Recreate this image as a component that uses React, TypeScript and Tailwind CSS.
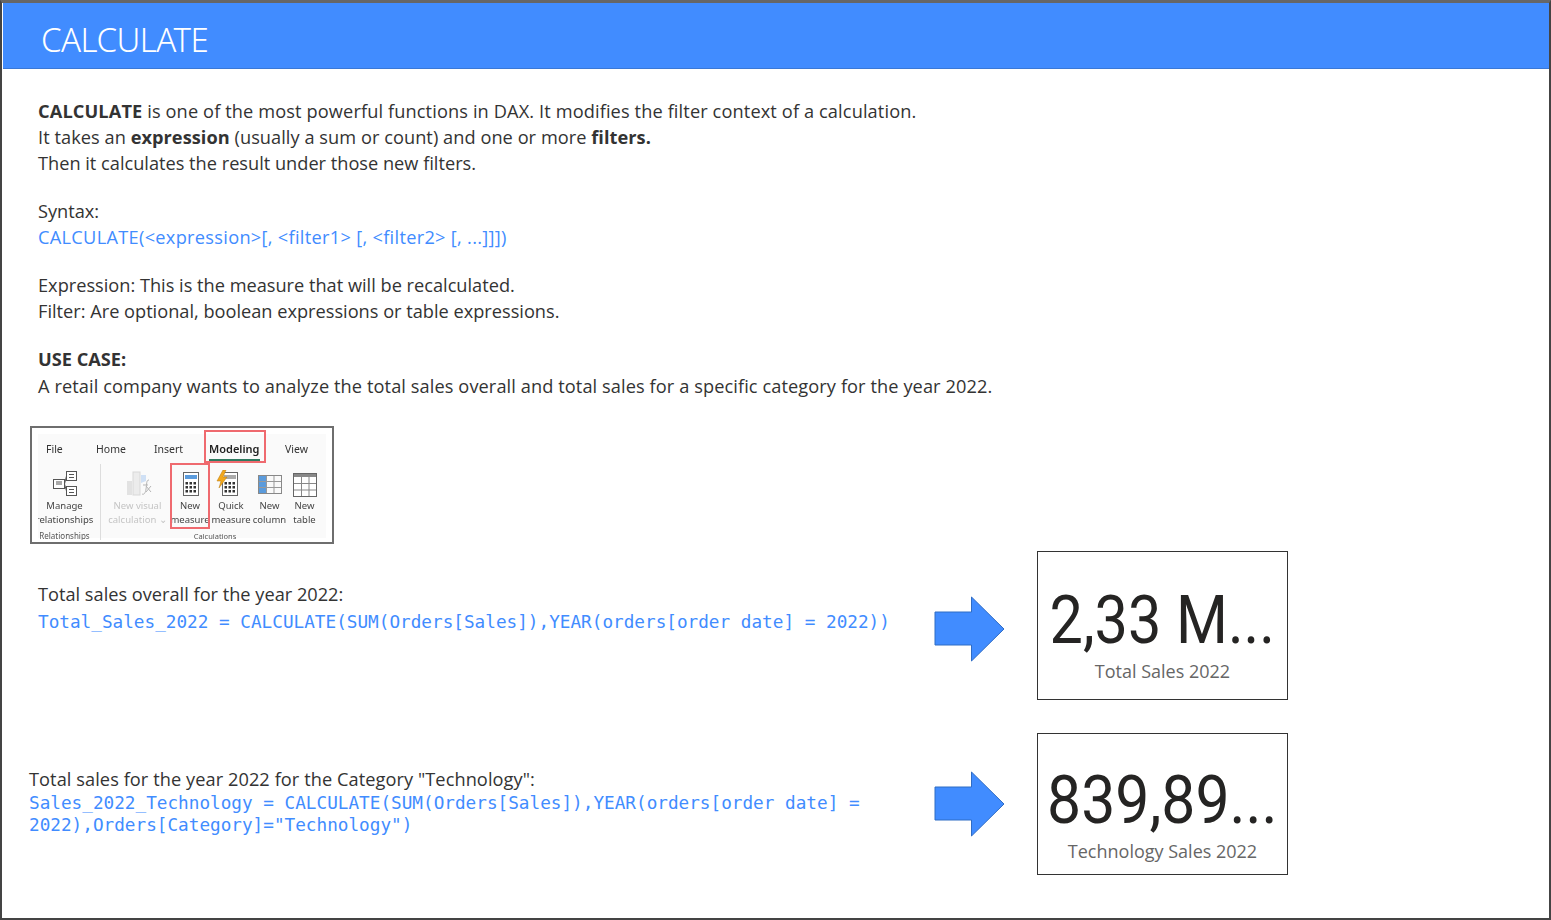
import React from 'react';

const BLUE = '#418cff';

const Arrow = () => (
  <svg width="72" height="66" viewBox="0 0 72 66" className="shrink-0">
    <path d="M1 16H37.5V1L70 33L37.5 65V49H1Z" fill={BLUE} stroke="#2f6cc4" strokeWidth="1" />
  </svg>
);

const ManageIcon = () => (
  <svg width="26" height="26" viewBox="0 0 26 26" fill="none" stroke="#555" strokeWidth="1">
    <rect x="1.500" y="8.500" width="11" height="9" fill="#fff" />
    <rect x="14.500" y="0.500" width="10" height="9" fill="#fff" />
    <rect x="14.500" y="15.500" width="10" height="9" fill="#fff" />
    <path d="M12.500 13L14.500 5M12.500 13L14.500 20M4 13H10M4 11H10M17 3.500H22M17 6.500H22M17 18.500H22M17 21.500H22" />
  </svg>
);

const VisualCalcIcon = () => (
  <svg width="26" height="26" viewBox="0 0 26 26" fill="none" className="ml-[3px]">
    <rect x="1" y="10" width="5" height="14" fill="#e2e2e2" />
    <rect x="7" y="1" width="7" height="23" fill="#ececec" stroke="#d8d8d8" />
    <path d="M15 4H20V10L15 12Z" fill="#cfe0f5" />
    <path d="M23 9C20 9 21 13 20 18C19.500 22 18 24 16 23M17 14H22M20 15L25 21M25 15L20 21" stroke="#b5b5b5" />
  </svg>
);

const CalcIcon = ({ bolt = false }: { bolt?: boolean }) => (
  <svg width={bolt ? 22 : 18} height="27" viewBox={bolt ? '0 0 22 27' : '4 0 18 27'} fill="none" className={bolt ? 'mr-[8px]' : ''}>
    <rect x="6.500" y="2.500" width="15" height="23" fill="#fff" stroke="#666" />
    <rect x="8" y="5" width="12" height="4" fill={bolt ? '#aaa' : '#5b9bdc'} />
    {[12, 16, 20].map(y =>
      [8.500, 12.500, 16.500].map(x => <rect key={`${x}-${y}`} x={x} y={y} width="2.500" height="2.500" fill="#333" />)
    )}
    {bolt && <path d="M7 0L1 11H5L3 18L11 7H7L10 0Z" fill="#f2a81d" stroke="#b87a10" strokeWidth="0.5" />}
  </svg>
);

const ColumnIcon = () => (
  <svg width="24" height="19" viewBox="0 0 24 19" fill="none" className="mb-[3px]">
    <rect x="1" y="1" width="7" height="17" fill="#5b9bdc" />
    <rect x="0.500" y="0.500" width="23" height="18" stroke="#888" />
    <path d="M8.500 1V18M16 1V18M1 6.500H23M1 12.500H23" stroke="#999" />
  </svg>
);

const TableIcon = () => (
  <svg width="24" height="24" viewBox="0 0 24 24" fill="none">
    <rect x="0.500" y="0.500" width="23" height="23" stroke="#666" fill="#fff" />
    <rect x="1" y="1" width="22" height="3" fill="#888" />
    <path d="M8.500 4V23M16 4V23M1 10.500H23M1 17H23" stroke="#888" />
  </svg>
);

const RibbonTool = ({ icon, lines, muted, width }: { icon: React.ReactNode; lines: string[]; muted?: boolean; width: string }) => (
  <div className={`flex flex-col items-center ${width} ${muted ? 'text-[#c4c4c4]' : 'text-[#444]'}`}>
    <div className="h-[33px] flex items-end justify-center">{icon}</div>
    <div className="mt-[2px] text-center text-[9.500px] leading-[14px] whitespace-nowrap">
      {lines.map(line => <div key={line} className="flex justify-center">{line}</div>)}
    </div>
  </div>
);

const Ribbon = () => (
  <div className="relative ml-[-8px] w-[304px] h-[118px] border-2 border-[#6e6e6e] bg-white overflow-hidden font-['Noto_Sans',sans-serif] blur-[0.3px]">
    <div className="absolute left-[6px] right-[6px] top-[6px] bottom-[4px] bg-[#fafafa]" />
    <div className="relative flex h-[36px] items-center pt-[6px] pl-[14px] text-[10.500px] text-[#333]">
      <span className="w-[50px]">File</span>
      <span className="w-[58px]">Home</span>
      <span className="w-[55px]">Insert</span>
      <span className="w-[76px] text-[11px] font-semibold text-[#222]">Modeling</span>
      <span>View</span>
    </div>
    <div className="relative flex pl-[6px]">
      <div className="flex w-[63px] flex-col items-center border-r border-[#ddd] h-[76px] pr-[9px] overflow-hidden">
        <RibbonTool icon={<ManageIcon />} lines={['Manage', 'relationships']} width="w-[53px]" />
        <div className="text-[8px] text-[#555] mt-[3px] leading-[12px] whitespace-nowrap">Relationships</div>
      </div>
      <div className="flex flex-col">
        <div className="flex">
          <RibbonTool icon={<VisualCalcIcon />} lines={['New visual', 'calculation ⌄']} muted width="w-[73px]" />
          <RibbonTool icon={<CalcIcon />} lines={['New', 'measure']} width="w-[32px]" />
          <RibbonTool icon={<CalcIcon bolt />} lines={['Quick', 'measure']} width="w-[50px]" />
          <RibbonTool icon={<ColumnIcon />} lines={['New', 'column']} width="w-[27px]" />
          <RibbonTool icon={<TableIcon />} lines={['New', 'table']} width="w-[43px]" />
        </div>
        <div className="text-center text-[7.500px] text-[#555] mt-[3px] leading-[12px] pl-[3px]">Calculations</div>
      </div>
    </div>
    <div className="absolute left-[172px] top-[2px] w-[62px] h-[33px] border-2 border-[#ef6a6f]" />
    <div className="absolute left-[177px] top-[31px] w-[51px] h-[2px] bg-[#2f7a60]" />
    <div className="absolute left-[138px] top-[35px] w-[40px] h-[66px] border-2 border-[#ef6a6f]" />
  </div>
);

const KpiCard = ({ value, label, className, valueClass }: { value: string; label: string; className: string; valueClass: string }) => (
  <div className={`w-[251px] shrink-0 border border-[#333] bg-white flex flex-col items-center justify-center ${className}`}>
    <div className={`font-['Roboto',sans-serif] text-[#252423] text-[66px] leading-[72px] whitespace-nowrap ${valueClass}`}>{value}</div>
    <div className="text-[18px] leading-[24px] mt-[2px] text-[#666]">{label}</div>
  </div>
);

export default function App() {
  return (
    <div className="w-[1551px] h-[920px] bg-white overflow-hidden font-['Open_Sans',sans-serif] text-[#333] border-x-2 border-b-2 border-t-[3px] border-x-[#444] border-b-[#444] border-t-[#666]">
      <header className="h-[66px] ml-[1px] bg-[#418cff] border-b border-[#3a78d6] flex items-center pl-[38px] pt-[8px]">
        <h1 className="text-[33px] font-['Noto_Sans',sans-serif] font-light text-white tracking-[-0.5px]">CALCULATE</h1>
      </header>

      <main className="pl-[36px] pt-[29px] text-[18.200px] leading-[26px]">
        <p className="tracking-[0.12px]"><b>CALCULATE</b> is one of the most powerful functions in DAX. It modifies the filter context of a calculation.</p>
        <p className="tracking-[0.05px]">It takes an <b>expression</b> (usually a sum or count) and one or more <b>filters.</b></p>
        <p>Then it calculates the result under those new filters.</p>

        <p className="mt-[22px]">Syntax:</p>
        <p className="text-[#418cff] tracking-[0.3px]">CALCULATE(&lt;expression&gt;[, &lt;filter1&gt; [, &lt;filter2&gt; [, ...]]])</p>

        <p className="mt-[22px]">Expression: This is the measure that will be recalculated.</p>
        <p>Filter: Are optional, boolean expressions or table expressions.</p>

        <p className="mt-[22px] font-bold">USE CASE:</p>
        <p className="mt-[1px] tracking-[0.09px]">A retail company wants to analyze the total sales overall and total sales for a specific category for the year 2022.</p>

        <div className="mt-[27px]">
          <Ribbon />
        </div>

        <div className="flex items-start mt-[7px]">
          <div className="w-[896px] pt-[30px]">
            <p>Total sales overall for the year 2022:</p>
            <p className="font-['DejaVu_Sans_Mono',monospace] text-[#418cff] text-[17.700px] leading-[28px] whitespace-nowrap mt-[1px]">Total_Sales_2022 = CALCULATE(SUM(Orders[Sales]),YEAR(orders[order date] = 2022))</p>
          </div>
          <div className="pt-[45px]"><Arrow /></div>
          <div className="ml-[31px]">
            <KpiCard value="2,33 M..." label="Total Sales 2022" className="h-[149px] pt-[16px]" valueClass="scale-x-[0.9]" />
          </div>
        </div>

        <div className="flex items-start mt-[33px] ml-[-9px]">
          <div className="w-[905px] pt-[34px]">
            <p className="leading-[24px] tracking-[0.07px]">Total sales for the year 2022 for the Category "Technology":</p>
            <p className="font-['DejaVu_Sans_Mono',monospace] text-[#418cff] text-[17.700px] leading-[22px] w-[860px] mt-[1px]">Sales_2022_Technology = CALCULATE(SUM(Orders[Sales]),YEAR(orders[order date] = 2022),Orders[Category]="Technology")</p>
          </div>
          <div className="pt-[38px]"><Arrow /></div>
          <div className="ml-[31px]">
            <KpiCard value="839,89..." label="Technology Sales 2022" className="h-[142px] pt-[20px]" valueClass="scale-x-[0.92]" />
          </div>
        </div>
      </main>
    </div>
  );
}
